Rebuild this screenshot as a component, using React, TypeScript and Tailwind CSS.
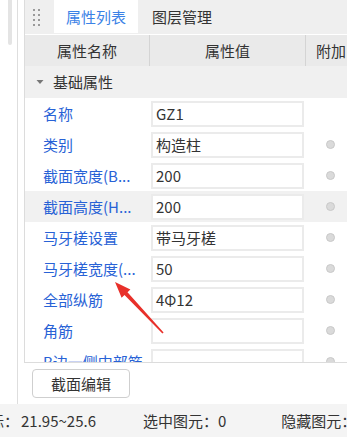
import React from "react";

const rows: { label: string; value: string; dot: boolean; hl?: boolean }[] = [
  { label: "名称", value: "GZ1", dot: false },
  { label: "类别", value: "构造柱", dot: true },
  { label: "截面宽度(B...", value: "200", dot: true },
  { label: "截面高度(H...", value: "200", dot: true, hl: true },
  { label: "马牙槎设置", value: "带马牙槎", dot: true },
  { label: "马牙槎宽度(...", value: "50", dot: true },
  { label: "全部纵筋", value: "4Φ12", dot: true },
  { label: "角筋", value: "", dot: true },
  { label: "B边一侧中部筋", value: "", dot: true },
];

function Grip() {
  return (
    <div className="grid grid-cols-2 gap-x-[3px] gap-y-[3px] ml-[8px] mr-[14px]">
      {Array.from({ length: 8 }).map((_, i) => (
        <div key={i} className="w-[2px] h-[2px] bg-[#9a9a9a]" />
      ))}
    </div>
  );
}

export default function App() {
  return (
    <div className="relative w-[347px] h-[437px] overflow-hidden bg-white flex flex-col text-[15px] text-[#333] font-['Noto_Sans_CJK_SC','Noto_Sans',sans-serif] leading-[20px]">
      <div className="flex h-[404px] shrink-0">
        {/* left panel */}
        <div className="w-[18px] shrink-0 border-r border-[#dedede] bg-white">
          <div className="ml-[8px] w-[4px] h-[45px] rounded-b-[2px] bg-[#e4e4e4]" />
        </div>
        <div className="w-[6px] shrink-0" />
        {/* main panel */}
        <div className="w-[340px] shrink-0 flex flex-col">
          <div className="h-[363px] shrink-0 border-l border-b border-[#dcdcdc] flex flex-col overflow-hidden">
            {/* tabs */}
            <div className="h-[34px] shrink-0 bg-[#efefef] flex items-center">
              <Grip />
              <div className="h-[33px] self-start w-[84px] bg-white flex items-center justify-center text-[#3b82e6]">
                属性列表
              </div>
              <div className="ml-[14px] text-[#333]">图层管理</div>
            </div>
            {/* header */}
            <div className="h-[31px] shrink-0 mt-[1px] bg-[#eaeaea] grid grid-cols-[125px_156px_1fr] items-stretch">
              <div className="flex items-center justify-center border-r border-[#d4d4d4]">属性名称</div>
              <div className="flex items-center justify-center border-r border-[#d4d4d4]">属性值</div>
              <div className="flex items-center pl-[10px] whitespace-nowrap">附加</div>
            </div>
            {/* group */}
            <div className="h-[32px] shrink-0 bg-[#f0f0f0] flex items-center">
              <svg width="8" height="6" viewBox="0 0 8 6" className="ml-[11px] mr-[9px]">
                <path d="M0.5 1 L7.5 1 L4 5 Z" fill="#777" />
              </svg>
              <span>基础属性</span>
            </div>
            {/* rows */}
            {rows.map((r) => (
              <div
                key={r.label}
                className={`h-[31px] shrink-0 grid grid-cols-[125px_156px_1fr] items-center ${r.hl ? "bg-[#f1f1f1]" : "bg-white"}`}
              >
                <div className="pl-[18px] text-[#2862d6] whitespace-nowrap">{r.label}</div>
                <div className="h-[26px] ml-[1px] mr-[2px] border-2 border-[#ebebeb] bg-white flex items-center pl-[3px] whitespace-nowrap">
                  {r.value}
                </div>
                <div className="flex items-center">
                  {r.dot && (
                    <div className="ml-[20px] w-[9px] h-[9px] rounded-full bg-[#dadada] border border-[#c9c9c9]" />
                  )}
                </div>
              </div>
            ))}
          </div>
          <div className="flex-1 flex items-start pt-[6px] pl-[8px]">
            <div className="w-[98px] h-[29px] border border-[#cfcfcf] rounded-[4px] bg-white flex items-center justify-center text-[#333]">
              截面编辑
            </div>
          </div>
        </div>
      </div>
      {/* status bar */}
      <div className="flex-1 bg-[#f4f4f4] flex items-center whitespace-nowrap text-[#333]">
        <span className="ml-[-11px]">标：</span>
        <span className="ml-[2px]">21.95~25.6</span>
        <span className="ml-[47px]">选中图元：0</span>
        <span className="ml-[55px]">隐藏图元：</span>
      </div>
      {/* red arrow annotation */}
      <svg className="absolute left-0 top-0 pointer-events-none" width="347" height="437" viewBox="0 0 347 437">
        <polygon
          points="115,282 130.4,289.5 127.5,292.2 163.6,332.5 162.4,333.5 124.5,295 121.6,297.7"
          fill="#e8302a"
        />
      </svg>
    </div>
  );
}
